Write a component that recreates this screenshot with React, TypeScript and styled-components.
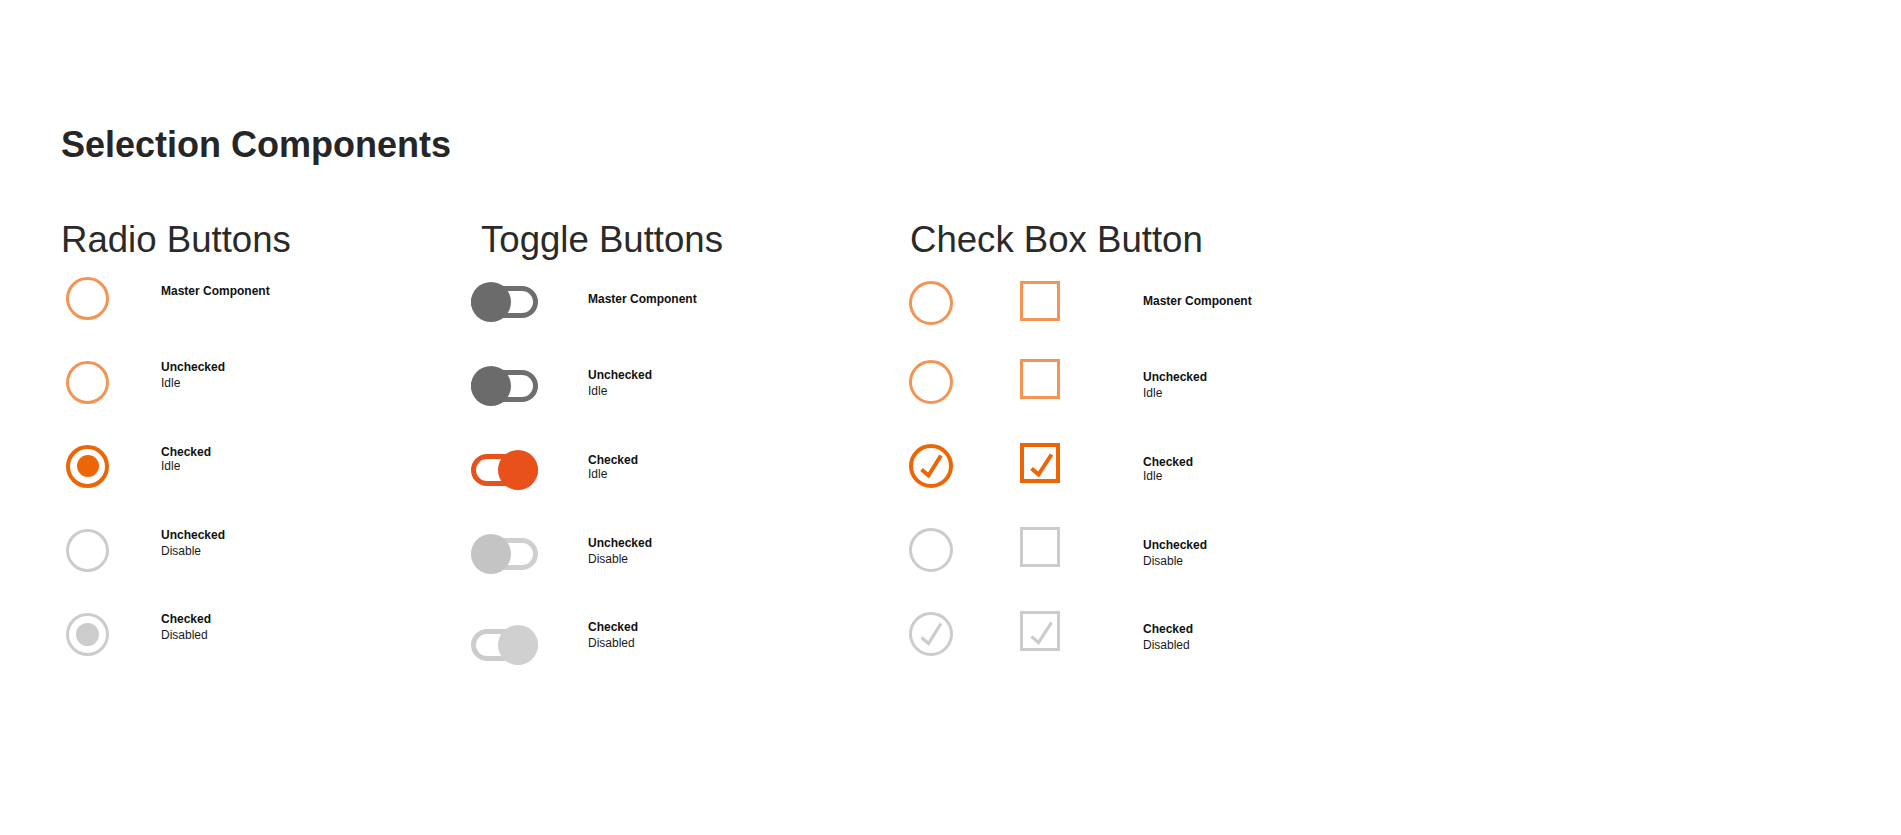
import React from 'react';
import styled, { createGlobalStyle, css } from 'styled-components';

type Variant = 'master' | 'off' | 'on' | 'offDisabled' | 'onDisabled';

const IDLE = '#F39455';
const ACTIVE = '#EC6608';
const TOGGLE_ON = '#E8511A';
const MUTED = '#CCCCCC';

const GlobalStyle = createGlobalStyle`
    html, body {
        margin: 0;
        padding: 0;
        background: #ffffff;
    }

    body {
        font-family: "Liberation Sans", Arial, sans-serif;
        color: #111;
    }
`;

const Page = styled.main`
    padding: 125px 0 0 61px;
    min-height: 835px;
    box-sizing: border-box;
`;

const Title = styled.h1`
    margin: 0;
    font-size: 36px;
    line-height: 40px;
    font-weight: 700;
    color: #262626;
`;

const Sections = styled.div`
    display: flex;
    margin-top: 55px;
`;

const Column = styled.section<{ $width?: number }>`
    display: flex;
    flex-direction: column;
    width: ${p => (p.$width ? `${p.$width}px` : 'auto')};
    flex: 0 0 auto;
`;

const Heading = styled.h2<{ $indent?: number }>`
    margin: 0;
    padding-left: ${p => p.$indent ?? 0}px;
    font-size: 36.6px;
    line-height: 40px;
    font-weight: 400;
    color: #2a2a2a;
`;

const List = styled.div<{ $top: number }>`
    display: flex;
    flex-direction: column;
    gap: 28px;
    margin-top: ${p => p.$top}px;
`;

const Row = styled.div<{ $pad?: number }>`
    display: flex;
    align-items: center;
    height: 56px;
    padding-left: ${p => p.$pad ?? 0}px;
`;

const Label = styled.div<{ $offset: number; $lift?: number }>`
    display: flex;
    flex-direction: column;
    margin-left: ${p => p.$offset}px;
    margin-bottom: ${p => p.$lift ?? 0}px;
    font-size: 12px;
    line-height: 16px;
`;

const LabelTitle = styled.span`
    font-weight: 700;
    color: #111;
`;

const LabelSub = styled.span<{ $tight?: boolean }>`
    color: #1a1a1a;
    margin-top: ${p => (p.$tight ? -2 : 0)}px;
`;

/* ---------- radio ---------- */

const radioTone = (v: Variant) => {
    switch (v) {
        case 'on':
            return css`border: 4px solid ${ACTIVE};`;
        case 'offDisabled':
        case 'onDisabled':
            return css`border: 3px solid ${MUTED};`;
        default:
            return css`border: 3px solid ${IDLE};`;
    }
};

const RadioRing = styled.span<{ $v: Variant }>`
    display: flex;
    align-items: center;
    justify-content: center;
    width: 43px;
    height: 43px;
    box-sizing: border-box;
    border-radius: 50%;
    flex: 0 0 auto;
    ${p => radioTone(p.$v)}
`;

const RadioDot = styled.span<{ $muted?: boolean }>`
    width: ${p => (p.$muted ? 23 : 22)}px;
    height: ${p => (p.$muted ? 23 : 22)}px;
    border-radius: 50%;
    background: ${p => (p.$muted ? MUTED : ACTIVE)};
`;

function Radio({ variant }: { variant: Variant }) {
    return (
        <RadioRing $v={variant}>
            {variant === 'on' && <RadioDot />}
            {variant === 'onDisabled' && <RadioDot $muted />}
        </RadioRing>
    );
}

/* ---------- toggle ---------- */

const toggleColors: Record<Variant, { track: string; knob: string }> = {
    master: { track: '#6E6E6E', knob: '#6B6B6B' },
    off: { track: '#6E6E6E', knob: '#6B6B6B' },
    on: { track: TOGGLE_ON, knob: TOGGLE_ON },
    offDisabled: { track: '#CFCFCF', knob: '#C4C4C4' },
    onDisabled: { track: '#CCCCCC', knob: '#D0D0D0' },
};

const ToggleBox = styled.span<{ $drop?: number }>`
    position: relative;
    display: flex;
    align-items: center;
    width: 67px;
    height: 40px;
    flex: 0 0 auto;
    margin-top: ${p => p.$drop ?? 0}px;
`;

const Track = styled.span<{ $color: string }>`
    width: 67px;
    height: 32px;
    box-sizing: border-box;
    border: 5px solid ${p => p.$color};
    border-radius: 16px;
`;

const Knob = styled.span<{ $color: string; $on: boolean }>`
    position: absolute;
    top: 0;
    ${p => (p.$on ? 'right: 0;' : 'left: 0;')}
    width: 40px;
    height: 40px;
    border-radius: 50%;
    background: ${p => p.$color};
`;

function Toggle({ variant, drop }: { variant: Variant; drop?: number }) {
    const c = toggleColors[variant];
    const on = variant === 'on' || variant === 'onDisabled';
    return (
        <ToggleBox $drop={drop}>
            <Track $color={c.track} />
            <Knob $color={c.knob} $on={on} />
        </ToggleBox>
    );
}

/* ---------- check box ---------- */

const boxTone = (v: Variant) => {
    switch (v) {
        case 'on':
            return `4px solid ${ACTIVE}`;
        case 'offDisabled':
        case 'onDisabled':
            return `3px solid ${MUTED}`;
        default:
            return `3px solid ${IDLE}`;
    }
};

// $shift moves the shape up (negative) or down (positive) from the row centre
const CheckShape = styled.span<{ $v: Variant; $round?: boolean; $size: number; $gap?: number; $shift?: number }>`
    display: block;
    width: ${p => p.$size}px;
    height: ${p => p.$size}px;
    box-sizing: border-box;
    flex: 0 0 auto;
    border: ${p => boxTone(p.$v)};
    border-radius: ${p => (p.$round ? '50%' : '0')};
    margin-left: ${p => p.$gap ?? 0}px;
    margin-top: ${p => Math.max(0, (p.$shift ?? 0) * 2)}px;
    margin-bottom: ${p => Math.max(0, -(p.$shift ?? 0) * 2)}px;

    svg {
        display: block;
        width: 100%;
        height: 100%;
    }
`;

function CheckMark({ variant, size, points }: { variant: Variant; size: number; points: string }) {
    const b = variant === 'on' ? 4 : 3;
    const color = variant === 'on' ? ACTIVE : MUTED;
    return (
        <svg viewBox={`${b} ${b} ${size - 2 * b} ${size - 2 * b}`} aria-hidden="true">
            <polyline
                points={points}
                fill="none"
                stroke={color}
                strokeWidth={variant === 'on' ? 4 : 3.2}
                strokeLinejoin="miter"
                strokeLinecap="butt"
            />
        </svg>
    );
}

function CheckCircle({ variant }: { variant: Variant }) {
    const checked = variant === 'on' || variant === 'onDisabled';
    return (
        <CheckShape $v={variant} $round $size={44} $shift={variant === 'master' ? 2 : -3.5}>
            {checked && <CheckMark variant={variant} size={44} points="12.5,25.5 19.5,31.5 32,11.5" />}
        </CheckShape>
    );
}

function CheckSquare({ variant }: { variant: Variant }) {
    const checked = variant === 'on' || variant === 'onDisabled';
    return (
        <CheckShape $v={variant} $size={40} $gap={67} $shift={variant === 'master' ? 0 : -6}>
            {checked && <CheckMark variant={variant} size={40} points="11.5,25.5 18.5,31.5 31.5,11.5" />}
        </CheckShape>
    );
}

/* ---------- data ---------- */

const rows: { variant: Variant; title: string; sub?: string; tight?: boolean }[] = [
    { variant: 'master', title: 'Master Component' },
    { variant: 'off', title: 'Unchecked', sub: 'Idle' },
    { variant: 'on', title: 'Checked', sub: 'Idle', tight: true },
    { variant: 'offDisabled', title: 'Unchecked', sub: 'Disable' },
    { variant: 'onDisabled', title: 'Checked', sub: 'Disabled' },
];

function Text({ row, offset, lift }: { row: typeof rows[number]; offset: number; lift?: number }) {
    return (
        <Label $offset={offset} $lift={lift}>
            <LabelTitle>{row.title}</LabelTitle>
            {row.sub && <LabelSub $tight={row.tight}>{row.sub}</LabelSub>}
        </Label>
    );
}

export default function App() {
    return (
        <>
            <GlobalStyle />
            <Page>
                <Title>Selection Components</Title>
                <Sections>
                    <Column $width={410}>
                        <Heading>Radio Buttons</Heading>
                        <List $top={10}>
                            {rows.map(r => (
                                <Row key={r.variant} $pad={5}>
                                    <Radio variant={r.variant} />
                                    <Text row={r} offset={52} lift={15} />
                                </Row>
                            ))}
                        </List>
                    </Column>

                    <Column $width={438}>
                        <Heading $indent={10}>Toggle Buttons</Heading>
                        <List $top={14}>
                            {rows.map(r => (
                                <Row key={r.variant}>
                                    <Toggle variant={r.variant} drop={r.variant === 'onDisabled' ? 14 : 0} />
                                    <Text row={r} offset={50} lift={7} />
                                </Row>
                            ))}
                        </List>
                    </Column>

                    <Column>
                        <Heading $indent={1}>Check Box Button</Heading>
                        <List $top={13}>
                            {rows.map(r => (
                                <Row key={r.variant}>
                                    <CheckCircle variant={r.variant} />
                                    <CheckSquare variant={r.variant} />
                                    <Text row={r} offset={83} />
                                </Row>
                            ))}
                        </List>
                    </Column>
                </Sections>
            </Page>
        </>
    );
}
